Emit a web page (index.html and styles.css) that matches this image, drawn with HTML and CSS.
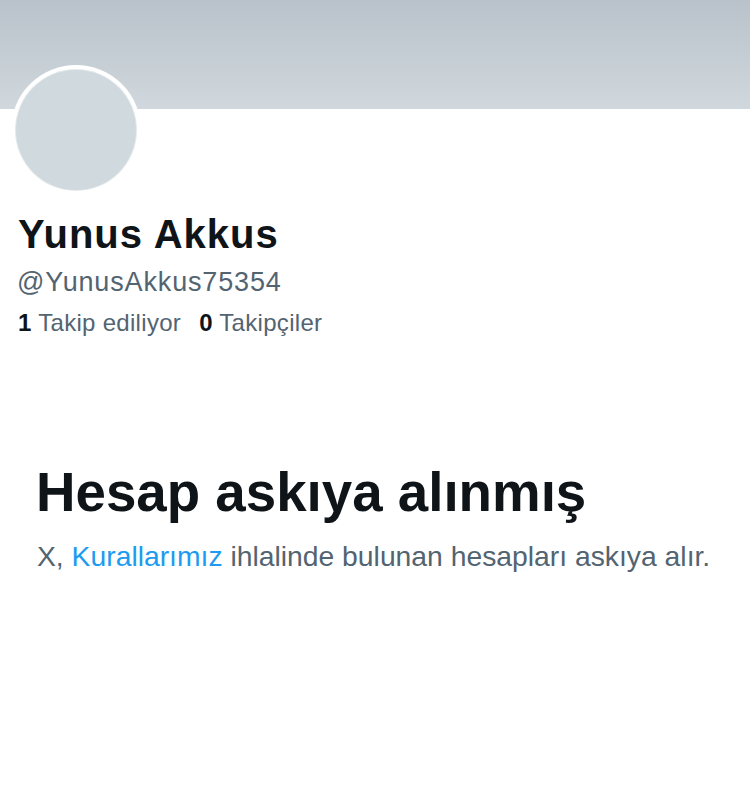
FILE: index.html
```html
<!DOCTYPE html>
<html lang="tr">
<head>
<meta charset="utf-8">
<title>Yunus Akkus</title>
<link rel="stylesheet" href="styles.css">
</head>
<body>
<div class="page">
  <div class="banner"></div>
  <div class="profile">
    <div class="avatar"><div class="avatar-inner"></div></div>
    <div class="name">Yunus Akkus</div>
    <div class="handle">@YunusAkkus75354</div>
    <div class="stats">
      <span class="stat"><b>1</b> Takip ediliyor</span>
      <span class="stat"><b>0</b> Takipçiler</span>
    </div>
  </div>
  <div class="suspended">
    <h1 class="title">Hesap askıya alınmış</h1>
    <p class="desc">X, <a class="link" href="#">Kurallarımız</a> ihlalinde bulunan hesapları askıya alır.</p>
  </div>
</div>
</body>
</html>
```

FILE: styles.css
```css
html, body {
  margin: 0;
  padding: 0;
  background: #ffffff;
}
.page {
  width: 750px;
  height: 809px;
  overflow: hidden;
  font-family: "Liberation Sans", Arial, sans-serif;
  color: #0f1419;
}
.banner {
  height: 109px;
  background: linear-gradient(180deg, #b9c2ca 0%, #c6ced5 55%, #d0d8dd 100%);
}
.profile {
  padding-left: 18px;
  display: flex;
  flex-direction: column;
}
.avatar {
  width: 130px;
  height: 130px;
  border-radius: 50%;
  background: #ffffff;
  margin-top: -44px;
  margin-left: -7px;
  display: flex;
  align-items: center;
  justify-content: center;
}
.avatar-inner {
  width: 120px;
  height: 120px;
  border-radius: 50%;
  background: #cfd9de;
  box-shadow: 0 0 0 1px #e4eaed;
}
.name {
  margin-top: 16px;
  font-size: 40px;
  line-height: 46px;
  font-weight: 700;
  letter-spacing: 1px;
  color: #0f1419;
}
.handle {
  margin-top: 9px;
  margin-left: -1px;
  font-size: 27px;
  line-height: 32px;
  letter-spacing: 0.85px;
  color: #536471;
}
.stats {
  margin-top: 11px;
  display: flex;
  gap: 18px;
  font-size: 24px;
  line-height: 28px;
  letter-spacing: 0.3px;
  color: #536471;
}
.stat b {
  color: #0f1419;
  font-weight: 700;
}
.suspended {
  padding-left: 37px;
  padding-right: 20px;
}
.title {
  margin: 123px 0 0 -1px;
  font-size: 54.7px;
  line-height: 64px;
  font-weight: 700;
  color: #0f1419;
}
.desc {
  margin: 15px 0 0 0;
  font-size: 28.3px;
  line-height: 34px;
  color: #536471;
  white-space: nowrap;
}
.link {
  color: #1d9bf0;
  text-decoration: none;
}
```
